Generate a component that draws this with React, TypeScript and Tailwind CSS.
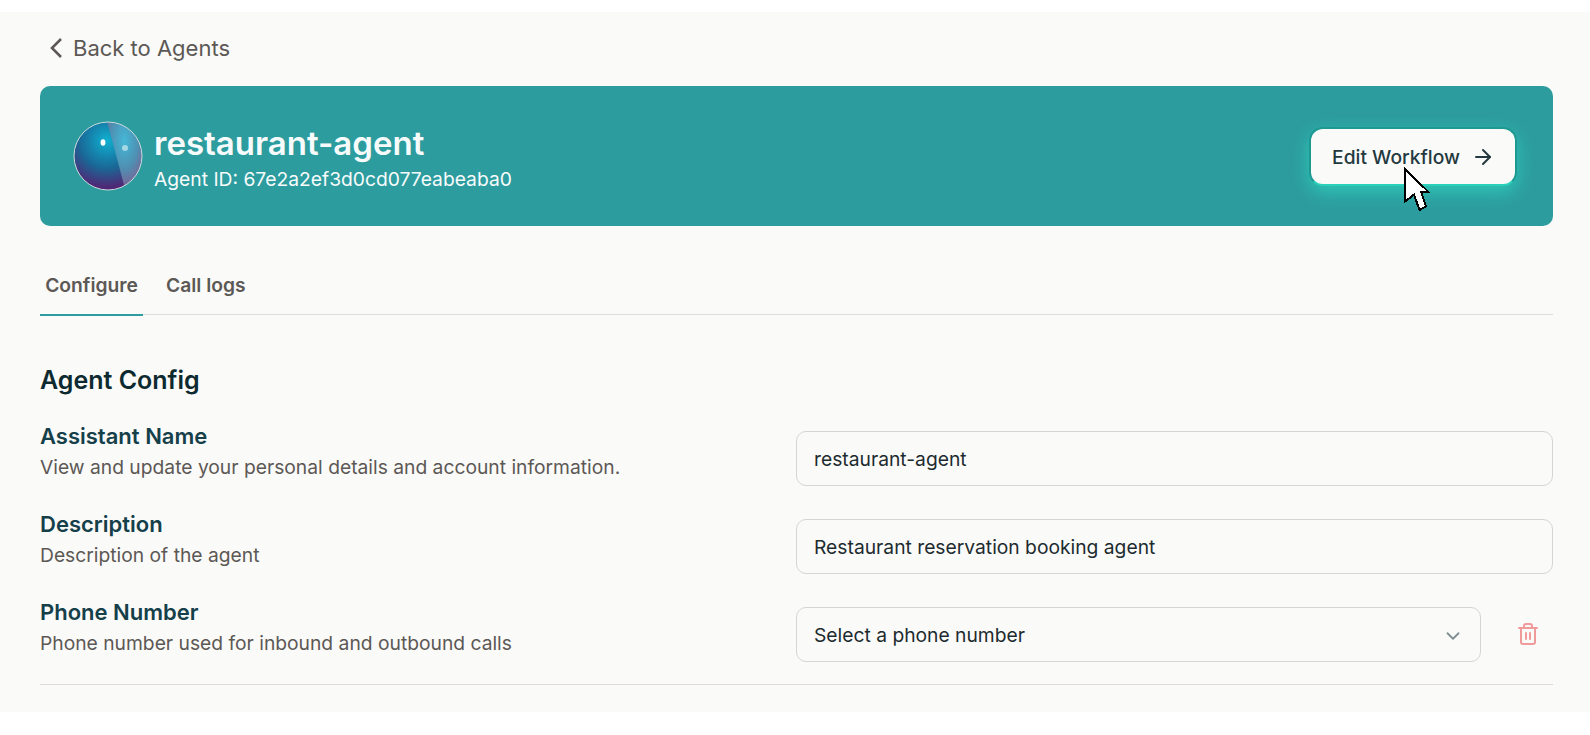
import React from 'react';
import { ChevronDown, ArrowRight, Trash2 } from 'lucide-react';

const fields = [
  { label: 'Assistant Name', help: 'View and update your personal details and account information.', value: 'restaurant-agent' },
  { label: 'Description', help: 'Description of the agent', value: 'Restaurant reservation booking agent' },
];

const Orb = () => (
  <svg width="70" height="70" viewBox="0 0 70 70" className="shrink-0">
    <defs>
      <radialGradient id="orbA" cx="48%" cy="28%" r="72%">
        <stop offset="0%" stopColor="#0fb0d0" />
        <stop offset="55%" stopColor="#1a6796" />
        <stop offset="100%" stopColor="#5a1c70" />
      </radialGradient>
      <radialGradient id="orbB" cx="48%" cy="28%" r="72%">
        <stop offset="0%" stopColor="#45b8d6" />
        <stop offset="55%" stopColor="#4f8fb2" />
        <stop offset="100%" stopColor="#85588f" />
      </radialGradient>
      <clipPath id="orbClip">
        <circle cx="35" cy="35" r="34" />
      </clipPath>
    </defs>
    <g clipPath="url(#orbClip)">
      <rect width="70" height="70" fill="url(#orbA)" />
      <path d="M34 0 L51 64 L70 70 L70 0 Z" fill="url(#orbB)" />
    </g>
    <circle cx="35" cy="35" r="34" fill="none" stroke="#c9dcdc" strokeWidth="1" />
    <ellipse cx="30" cy="21.5" rx="2.4" ry="3.2" fill="#ffffff" />
    <circle cx="52" cy="27" r="3" fill="#a5d8e6" />
  </svg>
);

// mouse pointer caught in the screenshot
const Cursor = () => (
  <svg width="27" height="45" viewBox="0 0 27 45" shapeRendering="crispEdges" className="absolute left-[94px] top-[40px]">
    <path d="M1.5 1.5 L1.5 35 L11 27.5 L16.5 43 L23 39.5 L18 24.5 L25 24.5 Z" fill="#ffffff" stroke="#000000" strokeWidth="2" />
  </svg>
);

export default function App() {
  return (
    <div className="min-h-[735px] bg-white pt-3 font-['Inter',sans-serif]">
      <div className="h-[700px] bg-[#fafaf8] pl-10 pr-[37px]">
        <div className="flex h-[74px] items-center gap-[10px] pb-[2px] pl-[9px] text-[#5c5855]">
          <svg width="14" height="22" viewBox="0 0 14 22" fill="none" stroke="currentColor" strokeWidth="2.6">
            <path d="M12 2 L3 11 L12 20" />
          </svg>
          <span className="text-[22px]">Back to Agents</span>
        </div>

        <div className="flex h-[140px] items-center justify-between rounded-[10px] bg-[#2d9c9f] pl-[33px] pr-9">
          <div className="flex items-center gap-[11px]">
            <Orb />
            <div className="pt-[2px] text-[#f7fbfb]">
              <h1 className="text-[33px] font-semibold leading-[36px]">restaurant-agent</h1>
              <p className="mt-[7px] text-[19.25px] leading-[22px]">Agent ID: 67e2a2ef3d0cd077eabeaba0</p>
            </div>
          </div>
          <div className="relative">
            <button className="flex h-[59px] w-[208px] items-center justify-center gap-[11px] rounded-[14px] border-2 border-[#1c9a92] border-b-[#2bd0b8] bg-[#fafaf8] pl-[1px] pt-[2px] text-[19.25px] font-medium text-[#24393f] shadow-[0_6px_18px_rgba(46,214,190,0.75)]">
              Edit Workflow
              <ArrowRight size={24} strokeWidth={2} />
            </button>
            <Cursor />
          </div>
        </div>

        <div className="mt-[33px] flex h-[56px] border-b border-[#dfdddb]">
          <div className="-mb-px flex h-[57px] w-[103px] items-center justify-center border-b-2 border-[#2e9ca0] pb-[3px] text-[19.25px] font-semibold text-[#5c5855]">
            Configure
          </div>
          <div className="flex h-[56px] items-center pb-[4px] pl-[23px] text-[19.25px] font-semibold text-[#5c5855]">
            Call logs
          </div>
        </div>

        <h2 className="mt-[49px] text-[25px] font-semibold leading-[32px] text-[#0d2a30]">Agent Config</h2>

        <div className="mt-[35px] flex flex-col gap-[33px]">
          {fields.map(f => (
            <div key={f.label} className="flex h-[55px] items-start">
              <div className="-mt-[10px] w-[756px]">
                <div className="text-[22px] font-semibold leading-[30px] text-[#15404a]">{f.label}</div>
                <div className="mt-[3px] text-[19.25px] leading-[26px] text-[#5c5855]">{f.help}</div>
              </div>
              <div className="flex h-[55px] flex-1 items-center rounded-[10px] border border-[#d8d4d1] pl-[17px] pr-[18px] pt-[2px] text-[19.25px] text-[#1d2b2f]">
                {f.value}
              </div>
            </div>
          ))}
          <div className="flex h-[55px] items-start">
            <div className="-mt-[10px] w-[756px]">
              <div className="text-[22px] font-semibold leading-[30px] text-[#15404a]">Phone Number</div>
              <div className="mt-[3px] text-[19.25px] leading-[26px] text-[#5c5855]">Phone number used for inbound and outbound calls</div>
            </div>
            <div className="flex h-[55px] w-[685px] items-center justify-between rounded-[10px] border border-[#d8d4d1] pl-[17px] pr-[16px] pt-[2px] text-[19.25px] text-[#1d2b2f]">
              Select a phone number
              <ChevronDown size={22} strokeWidth={2} className="text-[#7f8f93]" />
            </div>
            <Trash2 size={24} strokeWidth={2} className="ml-[35px] mt-[15px] text-[#f09a9a]" />
          </div>
        </div>

        <div className="mt-[22px] border-b border-[#dfd9d6]" />
      </div>
    </div>
  );
}
